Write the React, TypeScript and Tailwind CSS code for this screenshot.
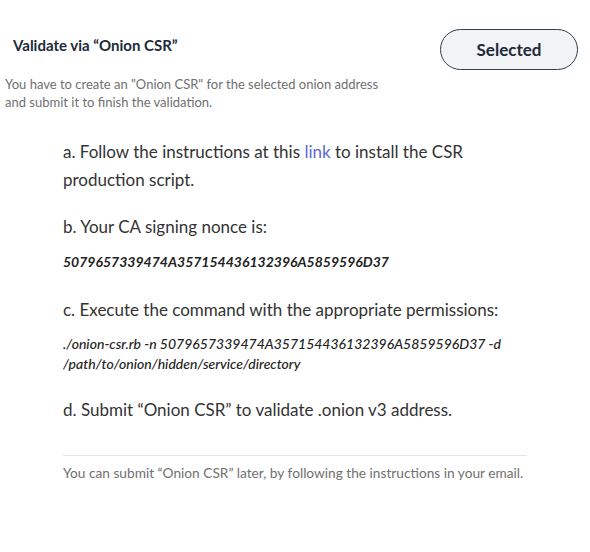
export default function App() {
  return (
    <div className="w-[590px] h-[552px] bg-white font-['Lato',sans-serif]">
      <div className="flex items-start justify-between pt-[29px] pr-[12px]">
        <div className="flex flex-col">
          <h2 className="pl-[13px] pt-[6px] text-[15px] font-bold text-[#1c2a3a] leading-[20px]">
            Validate via “Onion CSR”
          </h2>
          <p className="pl-[5px] mt-[20px] text-[13px] leading-[18px] text-[#707070] w-[390px]">
            You have to create an "Onion CSR" for the selected onion address and submit it to finish the validation.
          </p>
        </div>
        <button className="w-[138px] h-[41px] rounded-full border border-[#2c3e50] bg-[#f2f3f5] text-[17px] font-bold text-[#1c2a3a]">
          Selected
        </button>
      </div>
      <div className="pl-[63px] pr-[63px] mt-[27px] flex flex-col text-[#333333]">
        <p className="text-[17px] leading-[28px] w-[420px]">
          a. Follow the instructions at this <a className="text-[#5b6bd5]">link</a> to install the CSR production script.
        </p>
        <p className="text-[17px] leading-[28px] mt-[19px]">b. Your CA signing nonce is:</p>
        <p className="text-[14px] leading-[20px] mt-[11px] italic font-bold text-[#222222]">
          5079657339474A357154436132396A5859596D37
        </p>
        <p className="text-[17px] leading-[28px] mt-[24px]">c. Execute the command with the appropriate permissions:</p>
        <p className="text-[14px] leading-[20px] mt-[10px] italic font-medium text-[#222222] w-[464px]">
          ./onion-csr.rb -n 5079657339474A357154436132396A5859596D37 -d /path/to/onion/hidden/service/directory
        </p>
        <p className="text-[17px] leading-[28px] mt-[22px]">d. Submit “Onion CSR” to validate .onion v3 address.</p>
        <div className="border-t border-[#e2e6ea] mt-[31px] pt-[7px]">
          <p className="text-[13.7px] leading-[20px] text-[#707070]">
            You can submit “Onion CSR” later, by following the instructions in your email.
          </p>
        </div>
      </div>
    </div>
  );
}
